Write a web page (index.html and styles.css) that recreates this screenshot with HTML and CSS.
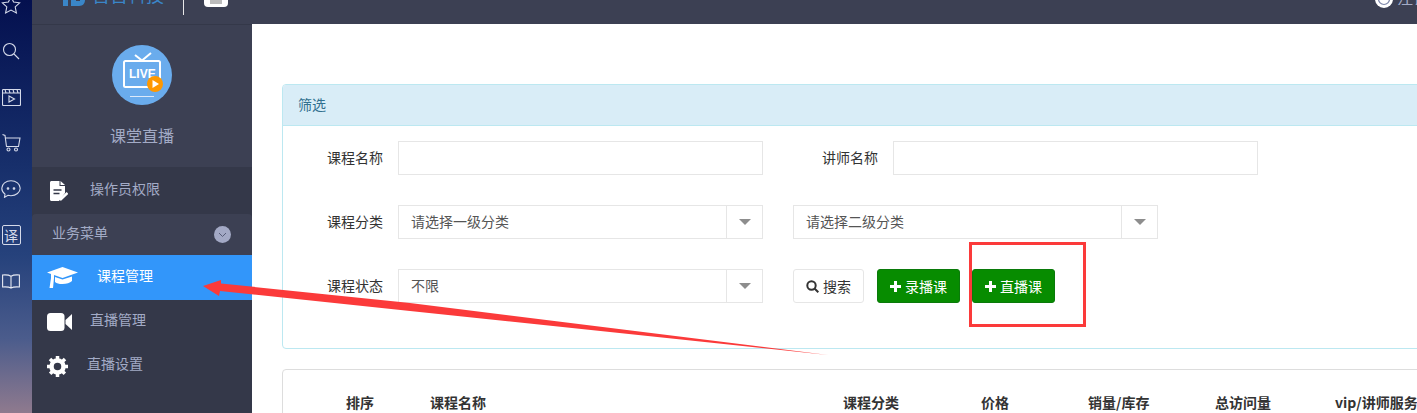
FILE: index.html
```html
<!DOCTYPE html>
<html lang="zh-CN">
<head>
<meta charset="utf-8">
<title>课堂直播</title>
<link rel="stylesheet" href="styles.css">
</head>
<body>
<div class="app">
  <nav class="rail">
    <div class="rail-list">
      <div class="rail-cell"><svg width="20" height="20" viewBox="0 0 20 20" fill="none" stroke="#d5daea" stroke-width="1.1"><path d="M10 1.500l2.600 5.600 6 .7-4.400 4.100 1.200 6L10 15l-5.400 2.900 1.200-6L1.400 7.800l6-.7z"/></svg></div>
      <div class="rail-cell"><svg width="18" height="18" viewBox="0 0 18 18" fill="none" stroke="#d5daea" stroke-width="1.1"><circle cx="7.500" cy="7.500" r="6"/><path d="M12 12l5 5"/></svg></div>
      <div class="rail-cell"><svg width="19" height="17" viewBox="0 0 19 17" fill="none" stroke="#d5daea" stroke-width="1.1"><rect x=".5" y=".5" width="18" height="16" rx="1"/><path d="M.5 4h18M3 .5l1 3.500M7 .5l1 3.500M11 .5l1 3.500M15 .5l1 3.500M7 7l5.500 3L7 13z"/></svg></div>
      <div class="rail-cell"><svg width="19" height="18" viewBox="0 0 19 18" fill="none" stroke="#d5daea" stroke-width="1.1"><path d="M.5 .5l2.500 1 1.500 11h12L18 4H3.300"/><circle cx="6.500" cy="15.500" r="1.500"/><circle cx="14" cy="15.500" r="1.500"/></svg></div>
      <div class="rail-cell"><svg width="20" height="18" viewBox="0 0 20 18" fill="none" stroke="#d5daea" stroke-width="1.1"><path d="M10 .7c5 0 9.200 3.300 9.200 7.500s-4.200 7.500-9.200 7.500c-1 0-2-.1-3-.4L3.500 17.300l.5-3.200C2 12.700.8 10.600.8 8.200.8 4 5 .7 10 .7z"/><circle cx="7" cy="8.500" r=".8" fill="#d5daea"/><circle cx="13" cy="8.500" r=".8" fill="#d5daea"/></svg></div>
      <div class="rail-cell"><span class="rail-yi">译</span></div>
      <div class="rail-cell"><svg width="18" height="15" viewBox="0 0 18 15" fill="none" stroke="#e6e9f2" stroke-width="1.1"><path d="M9 2.200C7 .9 3.500 .8 .6 1v12c3-.2 6.400-.1 8.400 1 2-1.100 5.400-1.200 8.400-1V1C14.500 .8 11 .9 9 2.200zM9 2.200V14"/></svg></div>
    </div>
  </nav>
  <div class="shell">
    <header class="topbar">
      <svg class="logo" width="22" height="6" viewBox="0 0 22 6" fill="#3a86c8"><rect x="0" y="0" width="5" height="6"/><path d="M8 0h5v1h4V0h5c0 3-2 6-6 6H8z"/></svg>
      <span class="brand">吉吉科技</span>
      <i class="top-sep"></i>
      <span class="top-tile"><i></i></span>
      <span class="top-title">在线课堂管理系统直播工具</span>
      <span class="top-user">
        <svg width="18" height="18" viewBox="0 0 18 18"><circle cx="9" cy="9" r="9" fill="#fff"/><circle cx="9" cy="9" r="5.500" fill="none" stroke="#7b85a8" stroke-width="1.200"/></svg>
        <span class="top-name">注销</span>
      </span>
    </header>
    <div class="body">
      <aside class="side">
        <div class="side-head">
          <svg class="live-badge" width="60" height="60" viewBox="0 0 60 60">
            <circle cx="30" cy="30" r="30" fill="#6aaced"/>
            <path d="M23 10l7 5.500L39 8" fill="none" stroke="#fff" stroke-width="2"/>
            <rect x="12" y="16" width="36" height="26" rx="1.500" fill="none" stroke="#fff" stroke-width="2"/>
            <text x="17" y="33" class="live-text">LIVE</text>
            <circle cx="43" cy="39" r="8" fill="#ff9800"/>
            <path d="M40.500 35l6.500 4-6.500 4z" fill="#fff"/>
            <path d="M18 51.500h24" stroke="#dbe9fa" stroke-width="1"/>
          </svg>
          <h1 class="side-title">课堂直播</h1>
        </div>
        <a class="item item-doc">
          <svg width="18" height="20" viewBox="0 0 18 20"><path d="M1.500 0H9.500v5H15v7l-6 8H1.500C.7 20 0 19.300 0 18.500v-17C0 .7 .7 0 1.500 0z" fill="#fff"/><path d="M10.500 0L15 4h-4.500z" fill="#fff"/><path d="M3.500 9h8M3.500 12.500h6" stroke="#343849" stroke-width="1.500"/><path d="M10 19l7.500-7" stroke="#fff" stroke-width="2.500"/></svg>
          <span>操作员权限</span>
        </a>
        <div class="section">
          <span>业务菜单</span>
          <span class="chev"><svg width="9" height="6" viewBox="0 0 9 6" fill="none" stroke="#565c78" stroke-width="1"><path d="M1 1l3.500 3.500L8 1"/></svg></span>
        </div>
        <a class="item item-cap active">
          <svg width="31" height="21" viewBox="0 0 31 21" fill="#fff"><path d="M15.500 0L31 5.500 15.500 11 7 8v3l-1 10H2.500L4 11V7L0 5.500z"/><path d="M8 10l7.500 2.500L25 9.500V14c-2 2-5.500 3-9.500 3S10 16.500 8 15z"/></svg>
          <span>课程管理</span>
        </a>
        <a class="item item-video">
          <svg width="25" height="18" viewBox="0 0 25 18" fill="#fff"><rect x="0" y="0" width="17.500" height="18" rx="3.500"/><path d="M18.500 7L25 1v16l-6.500-6z"/></svg>
          <span>直播管理</span>
        </a>
        <a class="item item-gear">
          <svg width="21" height="21" viewBox="0 0 21 21"><circle cx="10.500" cy="10.500" r="6" fill="none" stroke="#fff" stroke-width="4.500"/><path d="M10.500 0v21M0 10.500h21M3 3l15 15M18 3L3 18" stroke="#fff" stroke-width="3.500" stroke-dasharray="4 13" /></svg>
          <span>直播设置</span>
        </a>
      </aside>
      <main class="main">
        <section class="panel">
          <div class="panel-head">筛选</div>
          <div class="panel-body">
            <div class="row">
              <label class="lab">课程名称</label>
              <input class="ctl" type="text">
              <label class="lab lab-2">讲师名称</label>
              <input class="ctl" type="text">
            </div>
            <div class="row">
              <label class="lab">课程分类</label>
              <div class="ctl sel"><span>请选择一级分类</span><b></b></div>
              <div class="ctl sel sel-2"><span>请选择二级分类</span><b></b></div>
            </div>
            <div class="row">
              <label class="lab">课程状态</label>
              <div class="ctl sel"><span>不限</span><b></b></div>
              <button class="btn btn-search" type="button"><svg width="13" height="13" viewBox="0 0 13 13" fill="none" stroke="#333" stroke-width="2"><circle cx="5.500" cy="5.500" r="4.200"/><path d="M8.500 8.500L12.300 12.300"/></svg>搜索</button>
              <button class="btn btn-add" type="button"><svg width="11" height="11" viewBox="0 0 11 11" fill="#fff"><path d="M4 0h3v4h4v3H7v4H4V7H0V4h4z"/></svg>录播课</button>
              <button class="btn btn-add btn-live" type="button"><svg width="11" height="11" viewBox="0 0 11 11" fill="#fff"><path d="M4 0h3v4h4v3H7v4H4V7H0V4h4z"/></svg>直播课</button>
            </div>
          </div>
        </section>
        <section class="card">
          <div class="thead">
            <span class="c1">排序</span>
            <span class="c2">课程名称</span>
            <span class="c3">课程分类</span>
            <span class="c4">价格</span>
            <span class="c5">销量/库存</span>
            <span class="c6">总访问量</span>
            <span class="c7">vip/讲师服务</span>
          </div>
        </section>
      </main>
    </div>
  </div>
</div>
<svg class="markup" width="1417" height="413" viewBox="0 0 1417 413">
  <rect x="970.500" y="243.500" width="114" height="82" fill="none" stroke="#fb3a3a" stroke-width="3"/>
  <path d="M203 286L221 280L221 283.500L410 303L828 355L410 311L220 291L219 296z" fill="#fb3a3a"/>
</svg>
</body>
</html>
```
FILE: styles.css
```css
* { box-sizing: border-box; }
html, body { margin: 0; padding: 0; height: 100%; overflow: hidden; background: #fff; }
body {
  font-family: "Noto Sans CJK SC", "Liberation Sans", sans-serif;
  font-size: 14px;
  color: #333;
}
.app { display: flex; width: 1417px; height: 413px; overflow: hidden; }

.rail {
  flex: 0 0 32px;
  overflow: hidden;
  background: linear-gradient(180deg, #04104f 0%, #172f6b 40%, #26427c 62%, #4b5c8c 82%, #8f7a8e 100%);
}
.rail-list { display: flex; flex-direction: column; margin-top: -18px; padding-right: 10px; }
.rail-cell { flex: 0 0 46px; display: flex; align-items: center; justify-content: center; }
.rail-yi {
  display: flex; align-items: center; justify-content: center;
  width: 19px; height: 20px;
  border: 1px solid #d5daea; border-radius: 2px;
  color: #d5daea; font-size: 14px; line-height: 1;
}

.shell { flex: 1; display: flex; flex-direction: column; min-width: 0; }
.topbar {
  flex: 0 0 24px;
  display: flex; align-items: flex-end;
  overflow: hidden;
  background: #3c4053;
  padding-left: 31px;
  color: #a3abc6;
}
.logo { flex: none; margin-bottom: 18px; }
.brand { flex: none; margin: 0 0 21px 7px; font-size: 18px; line-height: 18px; color: #3a86c8; }
.top-sep { flex: none; width: 1px; height: 15px; margin: 0 0 9px 19px; background: #e8e8e8; }
.top-tile {
  flex: none; width: 24px; height: 24px; margin: 0 0 17px 20px;
  background: #fff; border-radius: 4px; display: flex; justify-content: center; align-items: flex-end;
}
.top-tile i { display: block; width: 12px; height: 18px; margin-bottom: 3px; background: #bcbcbc; }
.top-title { flex: none; margin: 0 0 24px 13px; font-size: 11.500px; line-height: 12px; color: #c8b88a; }
.top-user { margin-left: auto; display: flex; align-items: flex-end; }
.top-user svg { flex: none; margin-bottom: 16px; }
.top-name { flex: none; margin: 0 0 19px 4px; font-size: 16px; line-height: 16px; white-space: nowrap; width: 20px; overflow: hidden; }

.body { flex: 1; display: flex; min-height: 0; }
.side {
  flex: 0 0 220px;
  display: flex; flex-direction: column;
  background: #343849;
  border-top: 1px solid #343849;
  color: #a3abc6;
}
.side-head {
  flex: 0 0 142px;
  display: flex; flex-direction: column; align-items: center;
  background: #3c4053;
  padding-top: 20px;
}
.live-badge { display: block; }
.live-text { font: 700 12px "Liberation Sans", sans-serif; fill: #fff; }
.side-title { margin: 19px 0 0; font-size: 16px; line-height: 22px; font-weight: 400; color: #a3abc6; }

.item { display: flex; align-items: center; height: 44px; padding-left: 15px; color: #a3abc6; }
.item svg { flex: none; display: block; }
.item span { margin-bottom: 6px; }
.item-doc { height: 47px; padding-left: 18px; gap: 22px; }
.item-cap { height: 45px; gap: 19px; }
.item-cap span { margin-bottom: 5px; }
.item-video { gap: 18px; }
.item-gear { gap: 19px; }
.active { background: #3296fa; color: #fff; }
.section {
  display: flex; align-items: center; justify-content: space-between;
  height: 41px; padding: 0 21px 0 20px;
  background: #3c4053; border-radius: 4px 4px 0 0;
  color: #a3abc6;
}
.section > span:first-child { margin-bottom: 6px; }
.chev {
  display: flex; align-items: center; justify-content: center;
  width: 17px; height: 17px; border-radius: 50%; background: #a3a9c5;
}

.main { flex: 1; min-width: 0; overflow: hidden; padding: 60px 0 0 30px; background: #fff; }
.panel { width: 1200px; border: 1px solid #bce8f1; border-radius: 4px; }
.panel-head {
  height: 41px; padding: 0 15px 2px;
  display: flex; align-items: center;
  background: #d9edf7; border-bottom: 1px solid #bce8f1;
  border-radius: 3px 3px 0 0;
  color: #31708f; font-size: 14px;
}
.panel-body { display: flex; flex-direction: column; gap: 30px; padding: 15px 0 45px; }
.row { display: flex; align-items: center; height: 34px; }
.lab { flex: 0 0 100px; text-align: right; margin: 0 15px 2px 0; color: #333; }
.lab-2 { flex-basis: 85px; margin-left: 30px; }
.ctl { flex: 0 0 365px; width: 365px; height: 34px; border: 1px solid #e6e6e6; background: #fff; outline: 0; }
.sel { display: flex; align-items: center; padding-left: 12px; color: #555; }
.sel span { flex: 1; margin-bottom: 2px; }
.sel b { flex: 0 0 36px; height: 32px; border-left: 1px solid #e6e6e6; display: flex; align-items: center; justify-content: center; }
.sel b::after { content: ""; border: 6px solid transparent; border-top: 6px solid #8d8d8d; border-bottom: 0; }
.sel-2 { margin-left: 30px; }
.btn {
  display: flex; align-items: center; justify-content: center;
  height: 34px; padding: 0; font: inherit; border-radius: 3px; cursor: pointer;
}
.btn-search { width: 71px; margin-left: 30px; gap: 4px; background: #fff; border: 1px solid #e6e6e6; color: #333; }
.btn-add { width: 83px; margin-left: 13px; gap: 4px; background: #078c00; border: 1px solid #0a7a0a; color: #fff; }
.btn-live { margin-left: 12px; }

.card { width: 1200px; height: 120px; margin-top: 20px; border: 1px solid #ddd; border-radius: 4px; }
.thead { display: flex; padding: 21px 0 0 63px; font-weight: 700; line-height: 22px; color: #333; white-space: nowrap; }
.c1 { flex: 0 0 84px; }
.c2 { flex: 0 0 413px; }
.c3 { flex: 0 0 138px; }
.c4 { flex: 0 0 107px; }
.c5 { flex: 0 0 127px; }
.c6 { flex: 0 0 120px; }
.c7 { flex: 0 0 120px; }

.markup { position: absolute; left: 0; top: 0; pointer-events: none; }
```
